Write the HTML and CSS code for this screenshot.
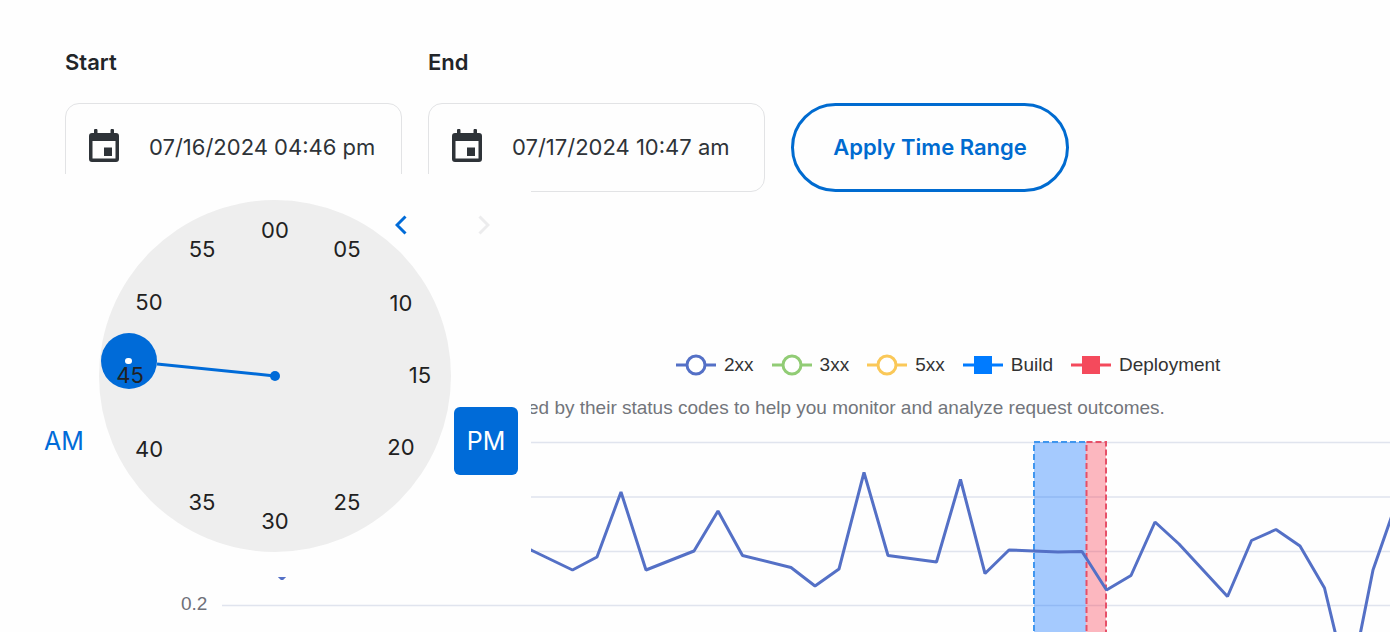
FILE: index.html
```
<!DOCTYPE html>
<html lang="en">
<head>
<meta charset="utf-8">
<meta name="viewport" content="width=device-width, initial-scale=1">
<title>Request metrics</title>
<link rel="stylesheet" href="styles.css">
</head>
<body>
<main class="page">
  <form class="range">
    <div class="field">
      <label class="field-label" for="start">Start</label>
      <div class="field-box">
        <svg class="calendar" viewBox="0 0 30 33" aria-hidden="true"><path fill-rule="evenodd" d="M5 1.500a1.500 1.500 0 0 1 3.500 0V4h13V1.500a1.500 1.500 0 0 1 3.500 0V4h2a3 3 0 0 1 3 3v23a3 3 0 0 1-3 3H3a3 3 0 0 1-3-3V7a3 3 0 0 1 3-3h2zM3.500 12v17.500h23V12zM15 18.500h8V27h-8z"/></svg>
        <input class="field-input" id="start" type="text" value="07/16/2024 04:46 pm">
      </div>
    </div>
    <div class="field">
      <label class="field-label" for="end">End</label>
      <div class="field-box">
        <svg class="calendar" viewBox="0 0 30 33" aria-hidden="true"><path fill-rule="evenodd" d="M5 1.500a1.500 1.500 0 0 1 3.500 0V4h13V1.500a1.500 1.500 0 0 1 3.500 0V4h2a3 3 0 0 1 3 3v23a3 3 0 0 1-3 3H3a3 3 0 0 1-3-3V7a3 3 0 0 1 3-3h2zM3.500 12v17.500h23V12zM15 18.500h8V27h-8z"/></svg>
        <input class="field-input" id="end" type="text" value="07/17/2024 10:47 am">
      </div>
    </div>
    <button class="apply" type="button">Apply Time Range</button>
  </form>

  <section class="chart">
    <ul class="legend">
      <li class="legend-item"><svg class="legend-mark" viewBox="0 0 40 24"><path d="M0 12h40" stroke="#5470c6" stroke-width="3"/><circle cx="20" cy="12" r="9" fill="#fff" stroke="#5470c6" stroke-width="3"/></svg>2xx</li>
      <li class="legend-item"><svg class="legend-mark" viewBox="0 0 40 24"><path d="M0 12h40" stroke="#91cc75" stroke-width="3"/><circle cx="20" cy="12" r="9" fill="#fff" stroke="#91cc75" stroke-width="3"/></svg>3xx</li>
      <li class="legend-item"><svg class="legend-mark" viewBox="0 0 40 24"><path d="M0 12h40" stroke="#fac858" stroke-width="3"/><circle cx="20" cy="12" r="9" fill="#fff" stroke="#fac858" stroke-width="3"/></svg>5xx</li>
      <li class="legend-item"><svg class="legend-mark" viewBox="0 0 40 24"><path d="M0 12h40" stroke="#007bff" stroke-width="3"/><path d="M11 3h18v18H11z" fill="#007bff"/></svg>Build</li>
      <li class="legend-item"><svg class="legend-mark" viewBox="0 0 40 24"><path d="M0 12h40" stroke="#f44a5c" stroke-width="3"/><path d="M11 3h18v18H11z" fill="#f44a5c"/></svg>Deployment</li>
    </ul>
    <p class="caption">ed by their status codes to help you monitor and analyze request outcomes.</p>
    <div class="plot">
      <span class="tick">0.2</span>
      <svg class="series" viewBox="222 432 1168 200" preserveAspectRatio="xMinYMin slice" role="img" aria-label="Requests by status code">
        <path d="M222 442.500H1390M222 497H1390M222 551.500H1390M222 605.500H1390" stroke="#e0e4ee" stroke-width="1.500"/>
        <path d="M1034 442h52v200h-52z" fill="#0069ff" fill-opacity=".35"/>
        <path d="M1086 442h20v200h-20z" fill="#fa2841" fill-opacity=".33"/>
        <path d="M1034 640V442H1086" fill="none" stroke="#4096ee" stroke-width="2" stroke-dasharray="6 3"/>
        <path d="M1086.500 640V442H1106V640" fill="none" stroke="#e65068" stroke-width="2" stroke-dasharray="6 3"/>
        <path d="M258 556L282 579L306 556L500 538L532 550.500L572.500 570L597 557L621 492L646 570L694 551L718 511L742.500 555.500L791 567.500L815 586L839 569L864 472.500L888 555.500L936.500 562L960.500 479.500L985 573.500L1009 550L1058 552L1082 551.500L1106.500 590L1131 575.500L1155 522L1179 544L1227.500 596.500L1251.500 540.500L1276 529.500L1300 546L1324.500 588L1337 640M1359 640L1373 570L1397 501" fill="none" stroke="#5470c6" stroke-width="3" stroke-linejoin="bevel"/>
      </svg>
    </div>
  </section>

  <section class="popup" aria-label="Choose minutes">
    <div class="arrows">
      <button class="arrow" type="button" aria-label="Previous view"><svg viewBox="0 0 12 20"><path d="M10.500 1.500L2 10l8.500 8.500"/></svg></button>
      <button class="arrow" type="button" aria-label="Next view" disabled><svg viewBox="0 0 12 20"><path d="M1.500 1.500L10 10l-8.500 8.500"/></svg></button>
    </div>
    <div class="picker">
      <button class="period" type="button">AM</button>
      <svg class="clock" viewBox="0 0 352 352" role="img" aria-label="46 minutes">
        <circle cx="176" cy="176" r="176" fill="#eee"/>
        <path d="M176 176L58 164" stroke="#006bd8" stroke-width="3"/>
        <circle cx="176" cy="176" r="5" fill="#006bd8"/>
        <circle cx="30" cy="161" r="28" fill="#006bd8"/>
        <rect x="26" y="158" width="7" height="6" rx="3" fill="#fff"/>
        <g class="minutes">
          <text x="176" y="38">00</text><text x="248" y="57">05</text><text x="302" y="111">10</text>
          <text x="321" y="183">15</text><text x="302" y="255">20</text><text x="248" y="310">25</text>
          <text x="176" y="329">30</text><text x="103" y="310">35</text><text x="50" y="257">40</text>
          <text x="31" y="183">45</text><text x="50" y="110">50</text><text x="103" y="57">55</text>
        </g>
      </svg>
      <button class="period period-on" type="button">PM</button>
    </div>
  </section>
</main>
</body>
</html>
```
FILE: styles.css
```
* { box-sizing: border-box; }

body {
  margin: 0;
  background: #fefefe;
  color: #212529;
  font-family: Inter, sans-serif;
  font-optical-sizing: none;
}

button { font: inherit; font-optical-sizing: none; border: 0; background: none; padding: 0; cursor: pointer; }

.page { position: relative; overflow: hidden; }

.range {
  display: flex;
  align-items: flex-end;
  gap: 26px;
  padding: 46px 65px 0;
}

.field { display: flex; flex-direction: column; gap: 25px; width: 337px; }
.field-label { font-size: 22px; font-weight: 600; line-height: 32px; }

.field-box {
  display: flex;
  align-items: center;
  gap: 30px;
  height: 89px;
  padding: 0 10px 2px 23px;
  border: 1px solid #e2e3e5;
  border-radius: 14px;
}

.calendar { flex: none; width: 30px; height: 33px; margin-bottom: 2px; fill: #2e3338; }

.field-input {
  flex: 1;
  min-width: 0;
  padding: 0;
  border: 0;
  outline: 0;
  background: none;
  color: #2e3338;
  font: 400 22px/32px Inter, sans-serif;
  font-optical-sizing: none;
}

.apply {
  width: 278px;
  height: 89px;
  padding-bottom: 2px;
  border: 3px solid #006bd0;
  border-radius: 45px;
  color: #006bd0;
  font-size: 22px;
  font-weight: 600;
}

.chart { padding-top: 160px; font-family: "Liberation Sans", Arial, sans-serif; }

.legend {
  display: flex;
  gap: 18px;
  margin: 0 0 0 676px;
  padding: 0;
  list-style: none;
  color: #333;
  font-size: 19px;
  line-height: 26px;
}

.legend-item { display: flex; align-items: center; gap: 8px; white-space: nowrap; }
.legend-mark { width: 40px; height: 24px; }

.caption {
  margin: 18px 0 0 528px;
  color: #72757b;
  font-size: 19px;
  line-height: 24px;
  white-space: nowrap;
}

.plot { display: flex; align-items: flex-end; gap: 14px; padding-left: 181px; margin-top: 12px; }
.tick { width: 27px; margin-bottom: 16px; color: #6e7079; font-size: 19px; line-height: 24px; }
.series { flex: 1; min-width: 0; height: 200px; }

.popup {
  position: absolute;
  top: 174px;
  left: 0;
  width: 531px;
  height: 403px;
  padding-top: 26px;
  background: #fefefe;
}

.arrows { position: absolute; top: 41px; left: 395px; display: flex; gap: 71px; }
.arrow { width: 12px; height: 20px; }
.arrow svg { display: block; width: 12px; height: 20px; fill: none; stroke: #006bd8; stroke-width: 3px; }
.arrow:disabled svg { stroke: #ececed; }

.picker { display: flex; align-items: flex-end; padding-left: 32px; gap: 3px; }
.clock { width: 352px; height: 352px; }
.minutes { fill: #212121; font-size: 22px; text-anchor: middle; }

.period {
  width: 64px;
  height: 68px;
  margin-bottom: 77px;
  border-radius: 6px;
  color: #006bd8;
  font-size: 25px;
}

.period-on { background: #006bd8; color: #fff; }
```
